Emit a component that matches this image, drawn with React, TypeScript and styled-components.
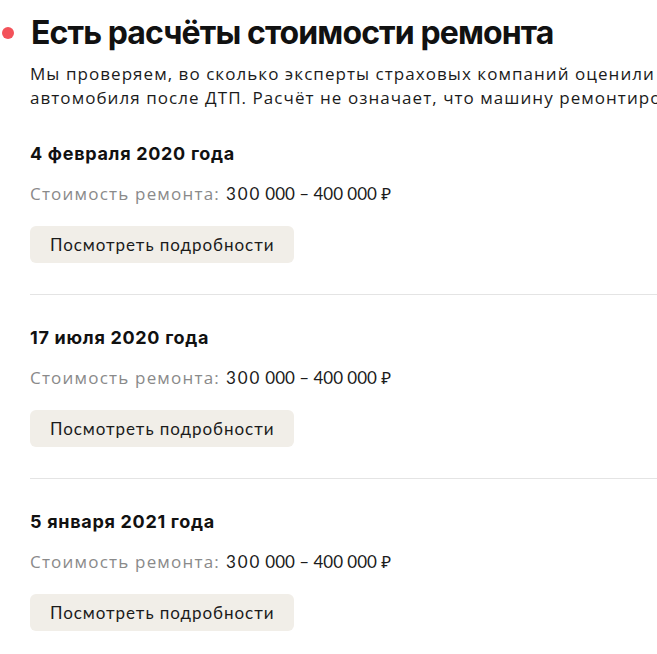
import React from "react";
import styled, { createGlobalStyle } from "styled-components";

const Global = createGlobalStyle`
  html, body { margin: 0; padding: 0; background: #fff; overflow: hidden; }
  body { font-family: Lato, "Noto Sans", sans-serif; color: #1b1b1b; }
`;

const Page = styled.div`
  width: 900px;
  padding: 13px 0 0 30px;
  box-sizing: border-box;
`;

const TitleRow = styled.div`
  display: flex;
  align-items: center;
  gap: 17px;
  margin-left: -28px;
`;

const Dot = styled.span`
  width: 12px;
  height: 12px;
  border-radius: 50%;
  background: #f3525a;
  flex: none;
`;

const Title = styled.h2`
  margin: 0;
  font-family: Inter, "Noto Sans", sans-serif;
  font-weight: 700;
  font-size: 32px;
  line-height: 40px;
  letter-spacing: -0.9px;
  color: #111;
`;

const Lead = styled.p`
  margin: 9px 0 1px;
  font-family: "Open Sans", "Noto Sans", sans-serif;
  font-size: 17px;
  line-height: 24px;
  width: 800px;
  letter-spacing: 1.05px;
  color: #1b1b1b;
`;

const Item = styled.section`
  padding: 31px 0 31px;
  border-bottom: 1px solid #e4e4e4;
  &:last-child { border-bottom: none; }
`;

const DateTitle = styled.h3`
  margin: 0;
  font-family: Inter, "Noto Sans", sans-serif;
  font-weight: 700;
  font-size: 18px;
  line-height: 24px;
  letter-spacing: 0.7px;
  color: #111;
`;

const Cost = styled.div`
  margin-top: 16px;
  font-size: 17px;
  line-height: 24px;
  letter-spacing: 1.8px;
`;

const CostLabel = styled.span`
  font-family: "Open Sans", "Noto Sans", sans-serif;
  letter-spacing: 1.2px;
  color: #8a8a8a;
`;

const Button = styled.button`
  display: block;
  margin-top: 20px;
  height: 37px;
  padding: 0 20px;
  border: none;
  border-radius: 6px;
  background: #f1eee8;
  font-family: Lato, "Noto Sans", sans-serif;
  font-size: 17px;
  letter-spacing: 0.95px;
  color: #1b1b1b;
  cursor: pointer;
`;

const items = ["4 февраля 2020 года", "17 июля 2020 года", "5 января 2021 года"];

export default function App() {
  return (
    <>
      <Global />
      <Page>
        <TitleRow>
          <Dot />
          <Title>Есть расчёты стоимости ремонта</Title>
        </TitleRow>
        <Lead>
          Мы проверяем, во сколько эксперты страховых компаний оценили ущерб
          автомобиля после ДТП. Расчёт не означает, что машину ремонтировали.
        </Lead>
        {items.map((d) => (
          <Item key={d}>
            <DateTitle>{d}</DateTitle>
            <Cost>
              <CostLabel>Стоимость ремонта:</CostLabel> 300&#8239;000 – 400&#8239;000&#8239;₽
            </Cost>
            <Button>Посмотреть подробности</Button>
          </Item>
        ))}
      </Page>
    </>
  );
}
